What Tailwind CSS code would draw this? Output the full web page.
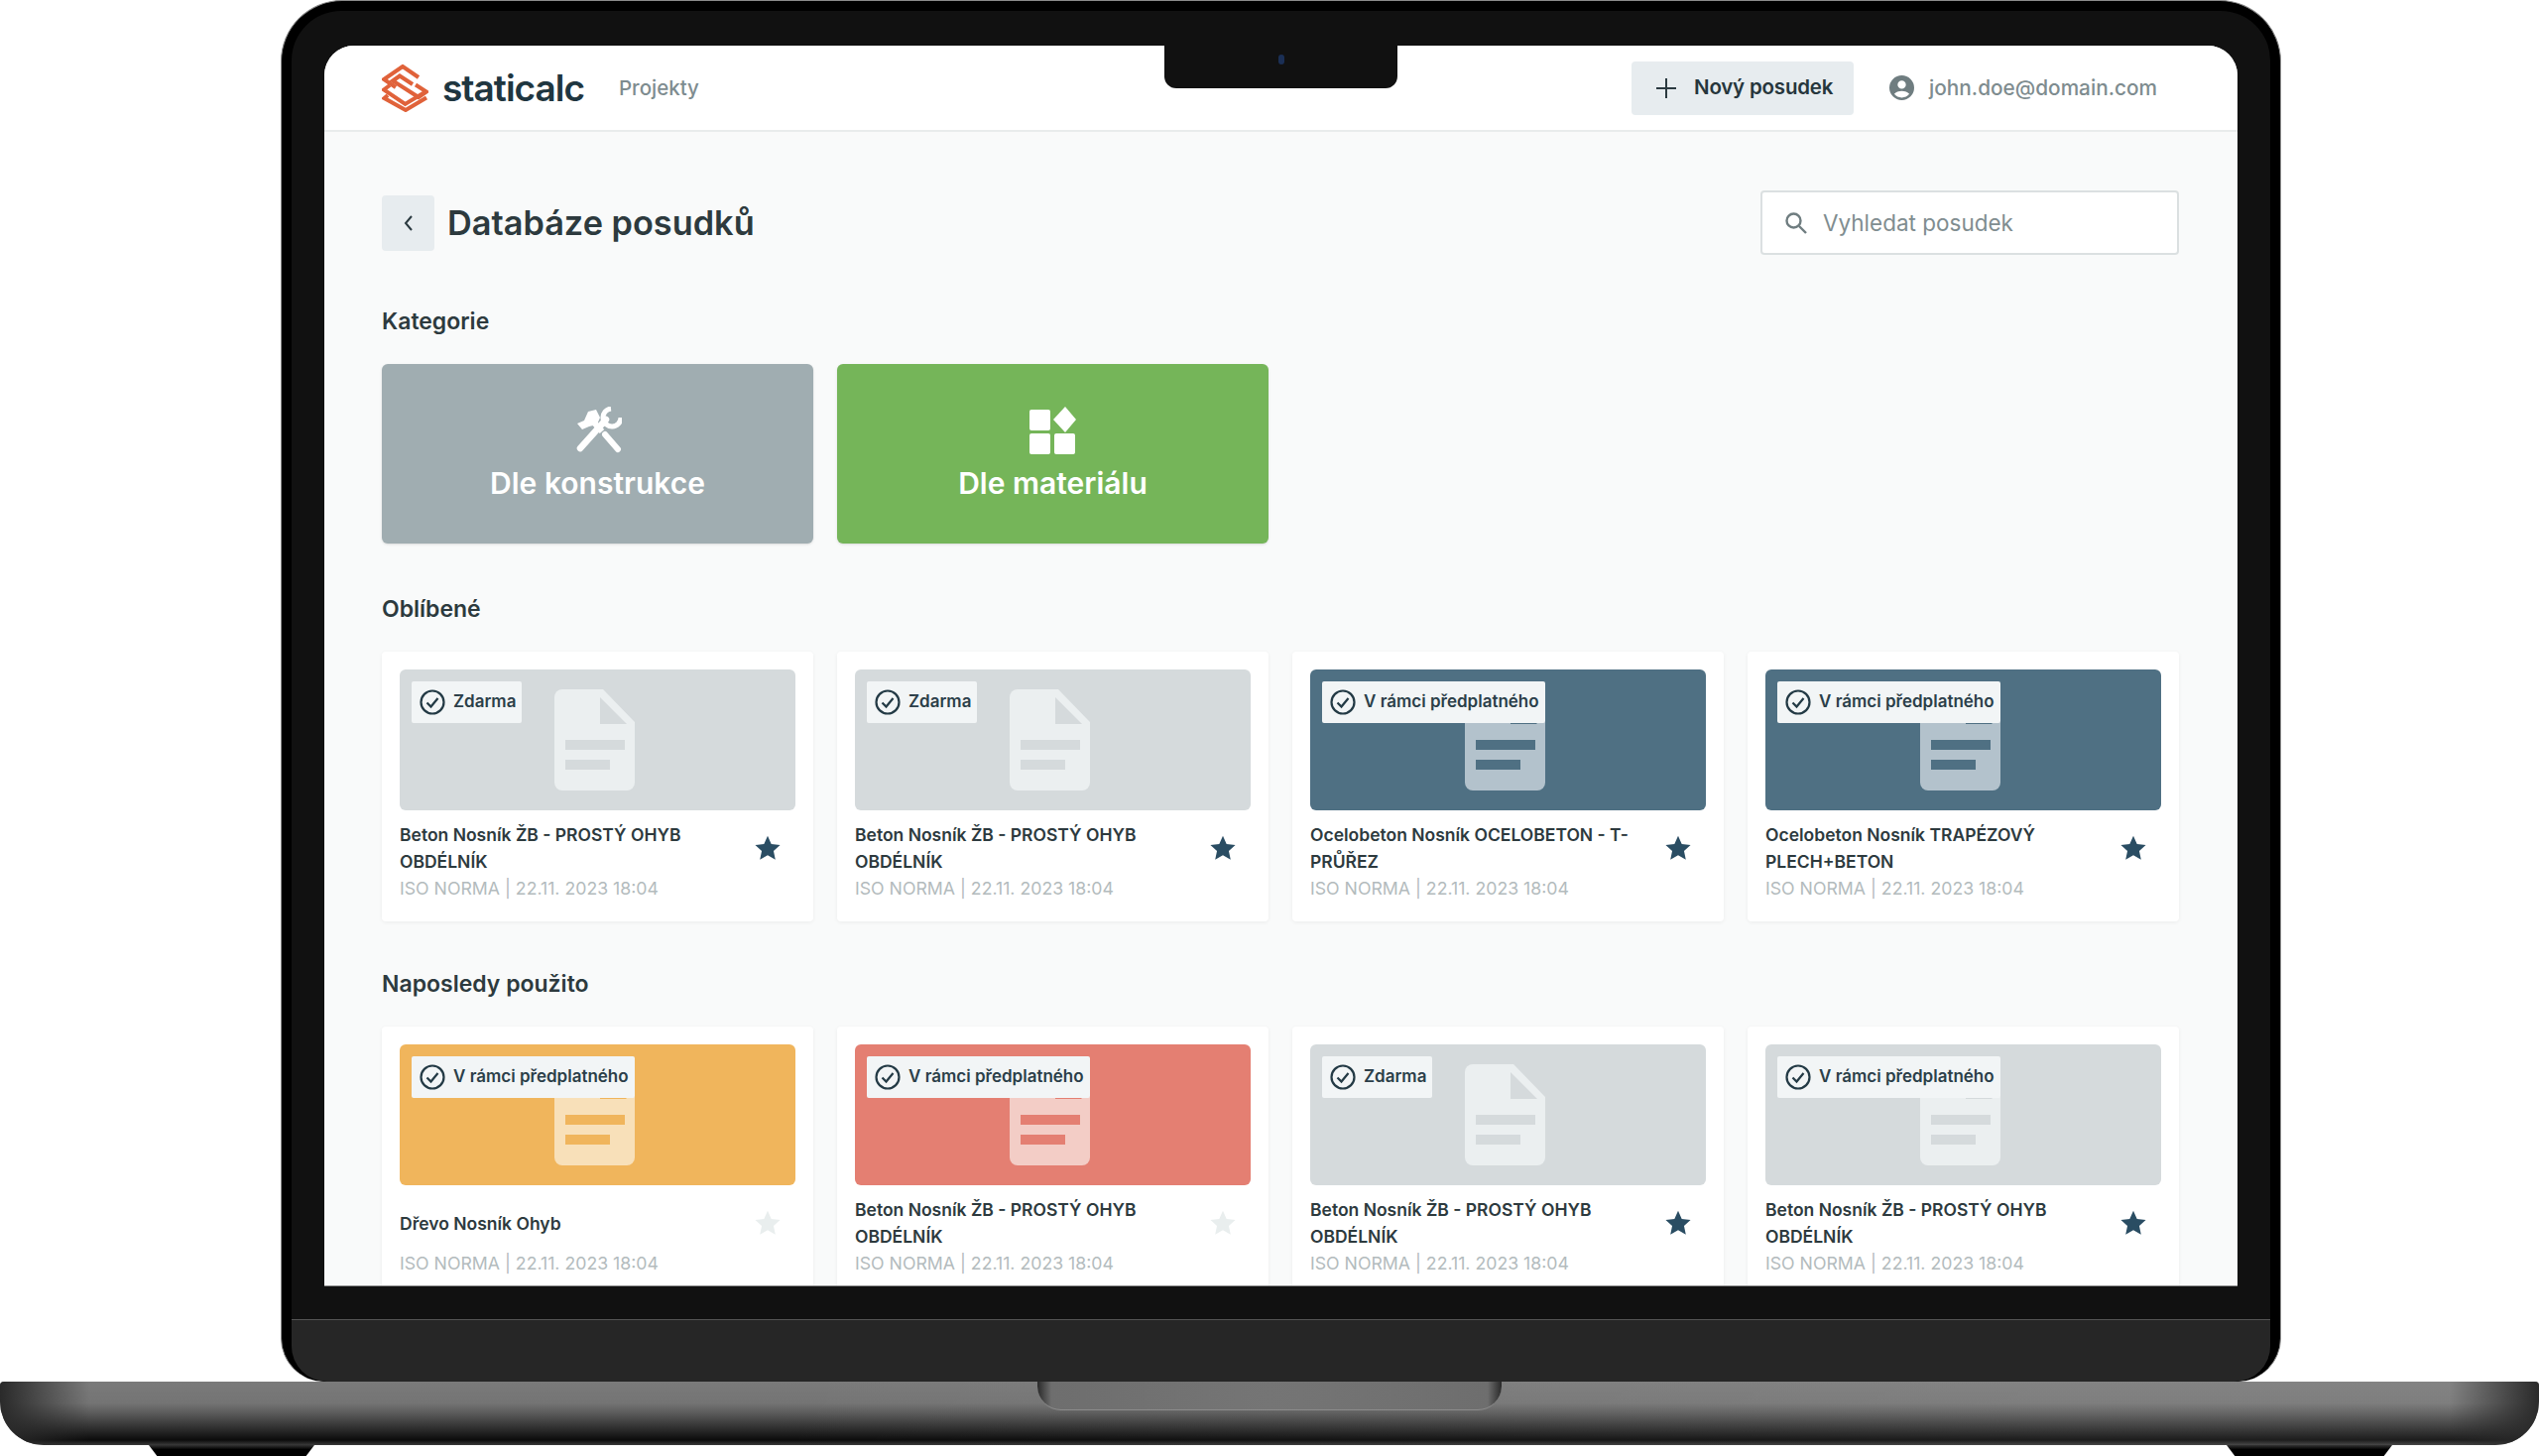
<!DOCTYPE html>
<html lang="cs">
<head>
  <meta charset="UTF-8">
  <title>Staticalc - Databáze posudků</title>
  <script src="https://cdn.jsdelivr.net/npm/@tailwindcss/browser@4"></script>
</head>
<body class="bg-white w-[2560px] h-[1468px] overflow-hidden font-['Inter',sans-serif] text-[#2b3a40]">

  <!-- Lid -->
  <div class="ml-[283px] w-[2017px] h-[1393px] bg-black rounded-t-[62px] rounded-b-[44px] px-[10px] pt-[10px] border-x border-t border-[#8a8a8a]">
    <div class="h-full bg-[#111111] rounded-t-[50px] rounded-b-[36px] overflow-hidden flex flex-col">
      <div class="px-[33px] pt-[35px] pb-[33px] relative">

        <!-- Notch -->
        <div class="absolute top-0 left-[880px] w-[235px] h-[78px] bg-[#111111] rounded-b-[12px] flex justify-center">
          <div class="mt-[44px] w-[6px] h-[10px] rounded-full bg-[#1b2f55]"></div>
        </div>

        <div class="h-[1251px] rounded-t-[30px] bg-[#f9fafa] overflow-hidden border-b border-[#8a8a8a]">
          <!-- Header -->
          <header class="h-[87px] bg-white border-b-2 border-[#e9ecec] pl-[58px] pr-[81px] flex items-center">
            <svg class="w-[47px] h-[48px]" viewBox="0 0 47 48" fill="none" stroke="#e0623a" stroke-width="4">
              <path d="M31 20 L18 11.5 L11 16.5 L37 33 L45 27.5 L34 20.5" />
              <path d="M37 13 L21 2 L2 15 L14 23" />
              <path d="M8 21 L2 25.5 L23.5 40 L45 27" />
              <path d="M6 31 L2.500 34 L24 46 L45 33.500" />
            </svg>
            <span class="ml-[14px] text-[37px] font-semibold tracking-[-1px] text-[#1f3640]">staticalc</span>
            <a class="ml-[35px] mt-[2px] text-[20.500px] font-medium text-[#7e8c8f]">Projekty</a>
            <button class="ml-auto h-[54px] w-[224px] rounded-[4px] bg-[#e7ecef] flex items-center pl-[25px] text-[20.500px] font-semibold tracking-[-0.2px] text-[#26363c]">
              <svg class="w-[20px] h-[20px] mr-[18px]" viewBox="0 0 20 20" stroke="#2b3a40" stroke-width="2"><path d="M10 0V20M0 10H20" /></svg>
              Nový posudek
            </button>
            <svg class="ml-[36px] w-[25px] h-[25px]" viewBox="0 0 24 24" fill="#6f7d80"><path fill-rule="evenodd" d="M12 0a12 12 0 100 24 12 12 0 000-24zm0 5a4 4 0 110 8 4 4 0 010-8zm0 16.500a9.500 9.500 0 01-7.300-3.400c1.500-2 4.300-3.100 7.300-3.100s5.800 1.100 7.300 3.100A9.500 9.500 0 0112 21.500z" /></svg>
            <span class="ml-[15px] text-[20.800px] font-medium text-[#7e8c8f]">john.doe@domain.com</span>
          </header>

          <main class="pl-[58px] pr-[59px]">
            <div class="pt-[59px] h-[124px] flex items-center">
              <button class="w-[53px] h-[56px] rounded-[4px] bg-[#e7ecef] flex items-center justify-center">
                <svg class="w-[10px] h-[16px]" viewBox="0 0 10 16" fill="none" stroke="#2b3a40" stroke-width="2"><path d="M8 1L2 8L8 15" /></svg>
              </button>
              <h1 class="ml-[13px] text-[34.300px] font-semibold text-[#2d3a3e]">Databáze posudků</h1>
              <div class="ml-auto w-[422px] h-[65px] bg-white border-2 border-[#dbe0e1] rounded-[4px] flex items-center pl-[22px]">
                <svg class="w-[24px] h-[24px]" viewBox="0 0 24 24" fill="none" stroke="#6f7d80" stroke-width="2.400"><circle cx="9.500" cy="9.500" r="7" /><path d="M15 15L22 22" /></svg>
                <span class="ml-[15px] text-[22.500px] text-[#808d90]">Vyhledat posudek</span>
              </div>
            </div>

            <h2 class="mt-[51px] mb-[29px] h-[30px] leading-[32px] text-[23px] font-semibold text-[#2d3a3e]">Kategorie</h2>
            <div class="grid grid-cols-4 gap-6">
              <div class="h-[181px] rounded-[6px] bg-[#a0adb1] shadow-sm flex flex-col items-center pt-[43px] text-white">
                <svg class="w-[48px] h-[48px]" viewBox="8 10 48 48">
                  <path fill="#ffffff" d="M11 27L18 24L22 15L30 13L34 21L31 28L23 30L16 33Z" />
                  <path fill="none" stroke="#ffffff" stroke-width="6.500" stroke-linecap="round" d="M14 52L40 23" />
                  <path fill="none" stroke="#ffffff" stroke-width="5" d="M45 12A9 9 0 1 0 55 21" />
                  <path fill="none" stroke="#ffffff" stroke-width="6" stroke-linecap="round" d="M39 38L52 53" />
                  <path fill="none" stroke="#ffffff" stroke-width="6" d="M27 25L36 35" />
                </svg>
                <span class="mt-[7px] text-[30px] font-semibold">Dle konstrukce</span>
              </div>
              <div class="h-[181px] rounded-[6px] bg-[#75b559] shadow-sm flex flex-col items-center pt-[43px] text-white">
                <svg class="w-[48px] h-[48px]" viewBox="0 0 48 48" fill="#ffffff">
                  <rect x="0" y="3" width="21" height="21" rx="2" />
                  <path d="M24 13 L36 0 L47 13 L36 26 Z" />
                  <rect x="0" y="27" width="21" height="21" rx="2" />
                  <rect x="25" y="27" width="21" height="21" rx="2" />
                </svg>
                <span class="mt-[7px] text-[30px] font-semibold">Dle materiálu</span>
              </div>
            </div>

            <h2 class="mt-[51px] mb-[28px] h-[30px] leading-[30px] text-[23px] font-semibold text-[#2d3a3e]">Oblíbené</h2>
            <div id="favorites" class="grid grid-cols-4 gap-6"></div>

            <h2 class="mt-[48px] mb-[28px] h-[30px] leading-[30px] text-[23px] font-semibold text-[#2d3a3e]">Naposledy použito</h2>
            <div id="recent" class="grid grid-cols-4 gap-6"></div>
          </main>
        </div>
      </div>
      <!-- Hinge strip -->
      <div class="flex-1 mx-0 bg-[#262626] border-t border-[#555555]"></div>
    </div>
  </div>

  <!-- Base -->
  <div class="relative h-[64px] rounded-b-[44px] rounded-t-[4px] overflow-hidden bg-[linear-gradient(180deg,#7a7a7a_0%,#747474_34%,#5a5a5a_50%,#262626_78%,#0c0c0c_92%,#3a3a3a_100%)]">
    <div class="absolute inset-0 bg-[linear-gradient(90deg,transparent_30%,rgba(255,255,255,0.07)_80%)]"></div>
    <div class="absolute inset-y-0 left-0 w-[90px] bg-[linear-gradient(90deg,#2a2a2a,transparent)]"></div>
    <div class="absolute inset-y-0 right-0 w-[90px] bg-[linear-gradient(270deg,#2a2a2a,transparent)]"></div>
    <!-- Lid opening -->
    <div class="absolute top-0 left-[1046px] w-[468px] h-[29px] rounded-b-[24px] border-b border-[#8c8c8c] bg-[linear-gradient(90deg,#2a2a2a_0%,#6e6e6e_3%,#757575_50%,#6e6e6e_97%,#2a2a2a_100%)]"></div>
  </div>

  <!-- Feet -->
  <div class="flex h-[11px]">
    <div class="ml-[150px] w-[167px] bg-[linear-gradient(180deg,#333333,#000000_40%)] [clip-path:polygon(0_0,100%_0,95%_100%,5%_100%)]"></div>
    <div class="ml-[1928px] w-[167px] bg-[linear-gradient(180deg,#333333,#000000_40%)] [clip-path:polygon(0_0,100%_0,95%_100%,5%_100%)]"></div>
  </div>

  <script>
    const grey = { thumb: 'bg-[#d5dadc]', fill: '#d5dadc', doc: '#ebeff0' };
    const blue = { thumb: 'bg-[#4f7083]', fill: '#4f7083', doc: '#b3c2cc' };
    const orange = { thumb: 'bg-[#f0b55c]', fill: '#f0b55c', doc: '#f8e0b9' };
    const red = { thumb: 'bg-[#e47f72]', fill: '#e47f72', doc: '#f3cdc6' };

    const beton = ['Beton Nosník ŽB - PROSTÝ OHYB', 'OBDÉLNÍK'];
    const FREE = 'Zdarma';
    const SUB = 'V rámci předplatného';

    const favorites = [
      { color: grey, badge: FREE, title: beton, star: true },
      { color: grey, badge: FREE, title: beton, star: true },
      { color: blue, badge: SUB, title: ['Ocelobeton Nosník OCELOBETON - T-', 'PRŮŘEZ'], star: true },
      { color: blue, badge: SUB, title: ['Ocelobeton Nosník TRAPÉZOVÝ', 'PLECH+BETON'], star: true },
    ];
    const recent = [
      { color: orange, badge: SUB, title: ['Dřevo Nosník Ohyb'], star: false },
      { color: red, badge: SUB, title: beton, star: false },
      { color: grey, badge: FREE, title: beton, star: true },
      { color: grey, badge: SUB, title: beton, star: true },
    ];

    function renderCard(item) {
      const starFill = item.star ? '#2a4d63' : '#e9eeee';
      return `
        <div class="h-[272px] bg-white rounded-[4px] shadow-[0_1px_4px_rgba(0,0,0,0.06)] p-[18px]">
          <div class="relative h-[142px] rounded-[6px] ${item.color.thumb} flex justify-center items-center pr-[6px]">
            <svg class="w-[81px] h-[102px]" viewBox="0 0 81 102">
              <path fill="${item.color.doc}" d="M8 0H49L81 33V94a8 8 0 01-8 8H8a8 8 0 01-8-8V8a8 8 0 018-8z" />
              <path fill="${item.color.fill}" d="M46 8L73 35H46z" />
              <rect fill="${item.color.fill}" x="11" y="51" width="60" height="10" />
              <rect fill="${item.color.fill}" x="11" y="71" width="45" height="10" />
            </svg>
            <div class="absolute left-[12px] top-[12px] h-[42px] rounded-[2px] bg-[#f2f5f6] flex items-center pl-[8px] pr-[6px] text-[17px] font-semibold text-[#2b3f49]">
              <svg class="w-[26px] h-[26px] mr-[8px]" viewBox="0 0 26 26" fill="none" stroke="#233a45" stroke-width="2.200"><circle cx="13" cy="13" r="11.500" /><path d="M7.500 13.500L11.500 17.500L18.500 9" /></svg>
              ${item.badge}
            </div>
          </div>
          <div class="mt-[11px] flex items-center justify-between pr-[15px]">
            <div>
              <div class="h-[54px] flex flex-col justify-center text-[17.500px] leading-[27px] font-semibold text-[#2d3a3e]">
                ${item.title.map(line => `<div class="whitespace-nowrap">${line}</div>`).join('')}
              </div>
            </div>
            <svg class="w-[26px] h-[26px] mt-[-1px]" viewBox="0 0 24 24" fill="${starFill}"><path d="M12 .8l3.400 7.500 8.200.9-6.100 5.500 1.700 8.100L12 18.700l-7.200 4.100 1.700-8.100L.4 9.200l8.200-.9z" /></svg>
          </div>
          <div class="h-[27px] leading-[28px] text-[17.700px] text-[#b3bbbd] whitespace-nowrap">ISO NORMA | 22.11. 2023 18:04</div>
        </div>`;
    }

    document.getElementById('favorites').innerHTML = favorites.map(renderCard).join('');
    document.getElementById('recent').innerHTML = recent.map(renderCard).join('');
  </script>
</body>
</html>
